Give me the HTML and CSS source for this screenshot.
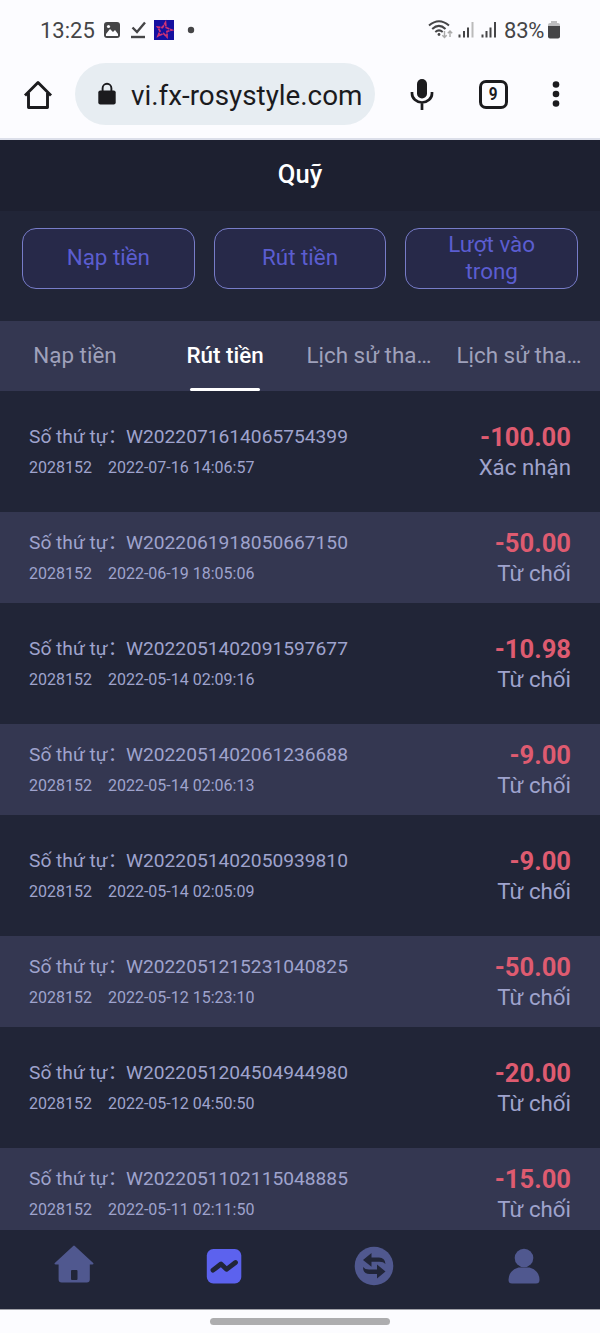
FILE: index.html
```html
<!DOCTYPE html>
<html lang="vi">
<head>
<meta charset="utf-8">
<title>Quỹ</title>
<link rel="stylesheet" href="styles.css">
</head>
<body>
<div class="screen">
  <div class="status">
    <span class="clock">13:25</span>
    <svg class="status-left" width="94" height="24" viewBox="0 0 94 24">
      <rect x="4" y="4" width="16" height="16" rx="3" fill="#454547"/>
      <path d="M6 16l4-5 3 3 2-2 3 4v2H6z" fill="#fcfcff"/><circle cx="8.5" cy="8.5" r="1.6" fill="#fcfcff"/>
      <path d="M32.500 9.500l4.500 4.500 8-9.500" fill="none" stroke="#454547" stroke-width="2.400"/>
      <path d="M31 19h14" stroke="#454547" stroke-width="2.400"/>
      <rect x="54" y="2" width="20" height="20" fill="#1510a0"/>
      <path d="M65.500 4.500l.5 5 6 2.500-5 1.500v5.500l-3.500-3.500-5.500 2.500 2-5-2.500-4 5 .5z" fill="none" stroke="#cf3474" stroke-width="1.700" stroke-dasharray="4 .7"/>
      <circle cx="91" cy="12" r="3.200" fill="#454547"/>
    </svg>
    <svg class="status-right" width="72" height="24" viewBox="0 0 72 24">
      <g fill="none" stroke="#454547" stroke-width="2">
        <path d="M1 7.500Q11 -1 21 7.500"/><path d="M4.200 11Q11 4.700 17.500 11"/><path d="M7.300 14Q11 10.800 14.700 14"/>
      </g>
      <circle cx="11" cy="16.500" r="1.400" fill="#454547"/>
      <path d="M16.500 13v6.500M14.300 17.300l2.200 2.300 2.200-2.300M22 19v-6M19.800 15.200l2.200-2.300 2.200 2.300" fill="none" stroke="#aaa" stroke-width="1.400"/>
      <path d="M31.500 16.500v3M36 13v6.500M40 9.500v10M54.500 16.500v3M58.500 13v6.500M62.500 9.500v10M67 4v15.500" stroke="#454547" stroke-width="2"/>
      <path d="M44.500 4v15.500" stroke="#bbb" stroke-width="2"/>
    </svg>
    <span class="percent">83%</span>
    <svg width="12" height="18" viewBox="0 0 12 18"><path d="M0 5V4q0-2 2-2h1V0h6v2h1q2 0 2 2v1z" fill="#bdbdbf"/><path d="M0 5h12v10.500q0 2-2 2H2q-2 0-2-2z" fill="#454547"/></svg>
  </div>
  <div class="browser">
    <svg class="home-icon" width="30" height="30" viewBox="0 0 30 30"><path d="M2 15.500L15 2.500l13 13M5.500 13v14.500h19V13" fill="none" stroke="#1b1b1e" stroke-width="2.900" stroke-linejoin="round"/></svg>
    <div class="address">
      <svg width="18" height="24" viewBox="0 0 18 24"><rect x=".3" y="8.500" width="17.400" height="14" rx="2" fill="#1b1b1e"/><path d="M4.600 10V6.200a4.400 4.400 0 018.800 0V10" fill="none" stroke="#1b1b1e" stroke-width="1.900"/></svg>
      <span>vi.fx-rosystyle.com</span>
    </div>
    <svg class="mic-icon" width="24" height="32" viewBox="0 0 24 32"><rect x="7" y="0" width="10" height="19.500" rx="5" fill="#1b1b1e"/><path d="M2 13v1.500a10 9 0 0020 0V13M12 23.500V31" fill="none" stroke="#1b1b1e" stroke-width="2.700"/></svg>
    <div class="tab-count"><span>9</span></div>
    <svg class="more-icon" width="8" height="26" viewBox="0 0 8 26"><g fill="#1b1b1e"><circle cx="4" cy="3.500" r="3.300"/><circle cx="4" cy="13" r="3.300"/><circle cx="4" cy="22.500" r="3.300"/></g></svg>
  </div>
  <header class="title">Quỹ</header>
  <div class="actions">
    <div class="action">Nạp tiền</div>
    <div class="action">Rút tiền</div>
    <div class="action">Lượt vào<br>trong</div>
  </div>
  <div class="tabs">
    <div class="tab"><span>Nạp tiền</span></div>
    <div class="tab active"><span>Rút tiền</span></div>
    <div class="tab clipped"><span>Lịch sử tha…</span></div>
    <div class="tab clipped"><span>Lịch sử tha…</span></div>
  </div>
  <main class="list">
    <div class="row"><div class="info"><div class="order"><span>Số thứ tự：</span><span>W2022071614065754399</span></div><div class="meta"><span>2028152</span><span>2022-07-16 14:06:57</span></div></div><div class="result"><div class="amount">-100.00</div><div class="state">Xác nhận</div></div></div>
    <div class="row"><div class="info"><div class="order"><span>Số thứ tự：</span><span>W2022061918050667150</span></div><div class="meta"><span>2028152</span><span>2022-06-19 18:05:06</span></div></div><div class="result"><div class="amount">-50.00</div><div class="state">Từ chối</div></div></div>
    <div class="row"><div class="info"><div class="order"><span>Số thứ tự：</span><span>W2022051402091597677</span></div><div class="meta"><span>2028152</span><span>2022-05-14 02:09:16</span></div></div><div class="result"><div class="amount">-10.98</div><div class="state">Từ chối</div></div></div>
    <div class="row"><div class="info"><div class="order"><span>Số thứ tự：</span><span>W2022051402061236688</span></div><div class="meta"><span>2028152</span><span>2022-05-14 02:06:13</span></div></div><div class="result"><div class="amount">-9.00</div><div class="state">Từ chối</div></div></div>
    <div class="row"><div class="info"><div class="order"><span>Số thứ tự：</span><span>W2022051402050939810</span></div><div class="meta"><span>2028152</span><span>2022-05-14 02:05:09</span></div></div><div class="result"><div class="amount">-9.00</div><div class="state">Từ chối</div></div></div>
    <div class="row"><div class="info"><div class="order"><span>Số thứ tự：</span><span>W2022051215231040825</span></div><div class="meta"><span>2028152</span><span>2022-05-12 15:23:10</span></div></div><div class="result"><div class="amount">-50.00</div><div class="state">Từ chối</div></div></div>
    <div class="row"><div class="info"><div class="order"><span>Số thứ tự：</span><span>W2022051204504944980</span></div><div class="meta"><span>2028152</span><span>2022-05-12 04:50:50</span></div></div><div class="result"><div class="amount">-20.00</div><div class="state">Từ chối</div></div></div>
    <div class="row"><div class="info"><div class="order"><span>Số thứ tự：</span><span>W2022051102115048885</span></div><div class="meta"><span>2028152</span><span>2022-05-11 02:11:50</span></div></div><div class="result"><div class="amount">-15.00</div><div class="state">Từ chối</div></div></div>
  </main>
  <nav class="dock">
    <div><svg width="40" height="40" viewBox="0 0 40 40"><path d="M19.200 0q.8-.8 1.600 0l18.400 17q1 1.500-1 1.500h-2.400V33.500q0 3-3 3H7.600q-3 0-3-3v-15H1.800q-2 0-1-1.500z" fill="#50588f"/><rect x="17" y="24" width="6.500" height="10" rx="1" fill="#212538"/></svg></div>
    <div><svg width="40" height="40" viewBox="0 0 40 40"><rect x="2.800" y="3" width="34.500" height="34.500" rx="6.500" fill="#5c62ee"/><path d="M9 24.200L17 18l5.500 5.300L31.500 16.500" fill="none" stroke="#212538" stroke-width="4.800" stroke-linecap="round" stroke-linejoin="round"/></svg></div>
    <div><svg width="40" height="40" viewBox="0 0 40 40"><circle cx="20" cy="20" r="19.300" fill="#50588f"/><path d="M9 14L17.500 7V11.500H25q6 0 6.500 6.500-2-2.300-6-2.300h-8v5z" fill="#212538"/><path d="M31.500 25.500L23 32.500V28h-7.500q-6.500 0-6.500-7 2 2.600 6 2.600h8v-5z" fill="#212538"/></svg></div>
    <div><svg width="40" height="40" viewBox="0 0 40 40"><circle cx="20" cy="12" r="9.300" fill="#50588f"/><path d="M4.500 34q0-9.500 10-12.500h11q10 3 10 12.500 0 3.500-3.500 3.500H8Q4.500 37.500 4.500 34z" fill="#50588f"/></svg></div>
  </nav>
  <footer class="gesture"><div class="handle"></div></footer>
</div>
</body>
</html>
```
FILE: styles.css
```css
* { box-sizing: border-box; }
body { margin: 0; font-family: Roboto, "Noto Sans CJK SC", sans-serif; }
svg { display: block; flex: none; overflow: visible; }
.screen { width: 600px; height: 1333px; overflow: hidden; display: flex; flex-direction: column; background: #212537; }
.screen > * { flex: none; }
.status { height: 60px; background: #fcfcff; display: flex; align-items: center; padding: 0 40px 0 40px; color: #454547; font-size: 22px; }
.clock { width: 60px; }
.status-right { margin-left: 234px; }
.percent { width: 44px; margin: 0 0 0 4px; letter-spacing: -.2px; }
.browser { height: 80px; background: #fcfcff; border-bottom: 2px solid #dcdfea; display: flex; align-items: flex-start; }
.home-icon { margin: 20px 0 0 23px; }
.address { width: 300px; height: 62px; margin: 3px 0 0 22px; padding-left: 23px; border-radius: 31px; background: #e7edf2; display: flex; align-items: center; gap: 15px; color: #1b1b1e; font-size: 27.800px; white-space: nowrap; }
.address span { padding-top: 3px; }
.mic-icon { margin: 19px 0 0 35px; }
.tab-count { width: 29px; height: 29px; margin: 20px 0 0 45px; border: 3px solid #1b1b1e; border-radius: 7px; display: flex; align-items: center; justify-content: center; font-weight: 700; font-size: 18px; line-height: 20px; padding-bottom: 1px; color: #1b1b1e; }
.tab-count span { transform: scaleX(.85); }
.more-icon { margin: 21px 0 0 44px; }
.title { height: 71px; line-height: 69px; background: #1d2030; color: #fff; text-align: center; font-weight: 500; font-size: 25.600px; }
.actions { height: 110px; padding: 17px 22px 0; display: flex; gap: 19px; align-items: flex-start; }
.action { flex: 1; height: 61px; padding-bottom: 2px; border: 1px solid #777cc8; border-radius: 14px; background: #272949; color: #5b5dd0; display: flex; align-items: center; justify-content: center; text-align: center; font-size: 22.400px; line-height: 27px; }
.tabs { height: 70px; background: #343751; display: flex; }
.tab { flex: none; width: 25%; height: 70px; line-height: 68px; text-align: center; white-space: nowrap; font-size: 22.400px; color: #9fa1bb; }
.clipped { text-align: left; padding-left: 6.500px; letter-spacing: 0; }
.active { position: relative; color: #fff; font-weight: 500; }
.active::after { content: ""; position: absolute; left: 40px; bottom: 0; width: 70px; height: 3.500px; border-radius: 2px; background: #fff; }
.list { height: 839px; padding-top: 14.500px; overflow: hidden; display: flex; flex-direction: column; gap: 14.580px; }
.row { flex: none; height: 91.500px; padding: 16px 29px 0; display: flex; justify-content: space-between; color: #9fa3cd; }
.row:nth-child(even) { background: #343751; }
.order { height: 30px; line-height: 30px; font-size: 19.200px; display: flex; }
.order span:first-child { width: 97px; white-space: nowrap; }
.meta { height: 31px; line-height: 31px; font-size: 16px; display: flex; gap: 16px; }
.result { text-align: right; }
.amount { height: 30px; line-height: 30px; font-size: 25.600px; font-weight: 700; color: #de5b70; }
.state { height: 32px; line-height: 30px; font-size: 22.300px; }
.dock { height: 79px; padding-top: 16px; display: flex; background: #212537; }
.dock > div { flex: 1; display: flex; justify-content: center; padding-right: 1.500px; }
.gesture { height: 24px; background: #fcfcff; border-top: 1px solid #a0a1a8; display: flex; justify-content: center; padding-top: 8px; }
.handle { width: 180px; height: 7px; border-radius: 4px; background: #adadaf; }
```
